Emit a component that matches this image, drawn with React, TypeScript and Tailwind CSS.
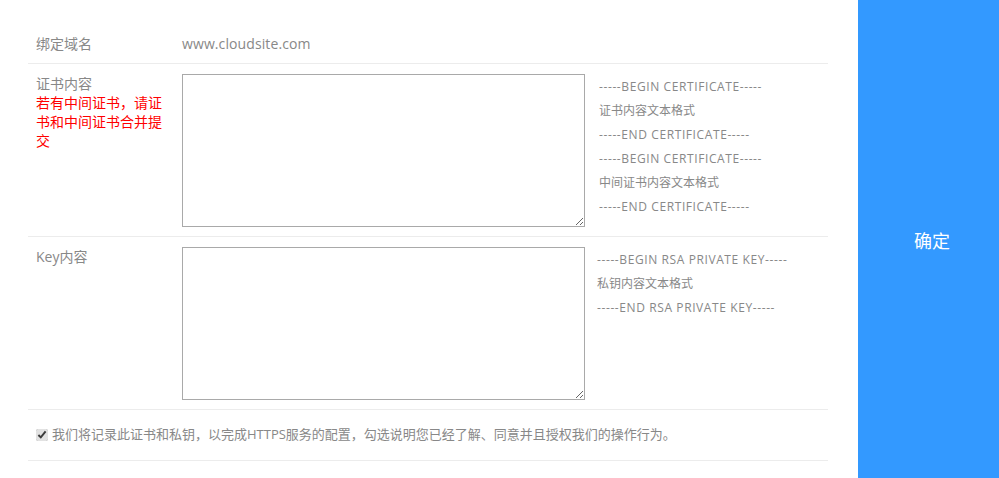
import React from "react";

const font = "font-['Open_Sans','Noto_Sans_CJK_SC',sans-serif]";

function Hint({ text }: { text: string }) {
  const latin = text.startsWith("-");
  return <div className={latin ? "tracking-[0.6px]" : ""}>{text}</div>;
}

export default function App() {
  const certHints = [
    "-----BEGIN CERTIFICATE-----",
    "证书内容文本格式",
    "-----END CERTIFICATE-----",
    "-----BEGIN CERTIFICATE-----",
    "中间证书内容文本格式",
    "-----END CERTIFICATE-----",
  ];
  const keyHints = ["-----BEGIN RSA PRIVATE KEY-----", "私钥内容文本格式", "-----END RSA PRIVATE KEY-----"];

  return (
    <div className={`flex h-[478px] w-[999px] bg-white ${font}`}>
      <div className="flex-1 pl-[28px] pr-[30px] pt-[24px]">
        {/* domain */}
        <div className="flex border-b border-[#ececec] pt-[10px] pb-[9px] leading-[20px]">
          <div className="w-[154px] pl-[8px] text-[14px] text-[#888]">绑定域名</div>
          <div className="text-[14px] tracking-[0.1px] text-[#888]">www.cloudsite.com</div>
        </div>

        {/* certificate */}
        <div className="flex border-b border-[#ececec] pt-[10px] pb-[9px]">
          <div className="w-[154px] pl-[8px] pr-[16px] text-[14px] leading-[19px]">
            <div className="text-[#888]">证书内容</div>
            <div className="text-[#ff0000]">若有中间证书，请证书和中间证书合并提交</div>
          </div>
          <textarea className="h-[153px] w-[403px] border border-[#a9a9a9] outline-none" />
          <div className="ml-[14px] pt-[1px] text-[12px] leading-[24px] text-[#888]">
            {certHints.map((h, i) => (
              <Hint key={i} text={h} />
            ))}
          </div>
        </div>

        {/* key */}
        <div className="flex border-b border-[#ececec] pt-[10px] pb-[9px]">
          <div className="w-[154px] pl-[8px] text-[14px] leading-[20px] text-[#888]">Key内容</div>
          <textarea className="h-[153px] w-[403px] border border-[#a9a9a9] outline-none" />
          <div className="ml-[12px] pt-[1px] text-[12px] leading-[24px] text-[#888]">
            {keyHints.map((h, i) => (
              <Hint key={i} text={h} />
            ))}
          </div>
        </div>

        {/* agreement */}
        <div className="flex h-[51px] items-center gap-[4px] border-b border-[#ececec] pl-[8px] text-[13px] text-[#888]">
          <input type="checkbox" defaultChecked className="m-0 h-[12px] w-[12px] accent-[#e2e2e2]" />
          <span>我们将记录此证书和私钥，以完成HTTPS服务的配置，勾选说明您已经了解、同意并且授权我们的操作行为。</span>
        </div>
      </div>

      <button className="flex w-[141px] items-center justify-center bg-[#3399ff] pl-[7px] pt-[5px] text-[18px] text-white">
        确定
      </button>
    </div>
  );
}
